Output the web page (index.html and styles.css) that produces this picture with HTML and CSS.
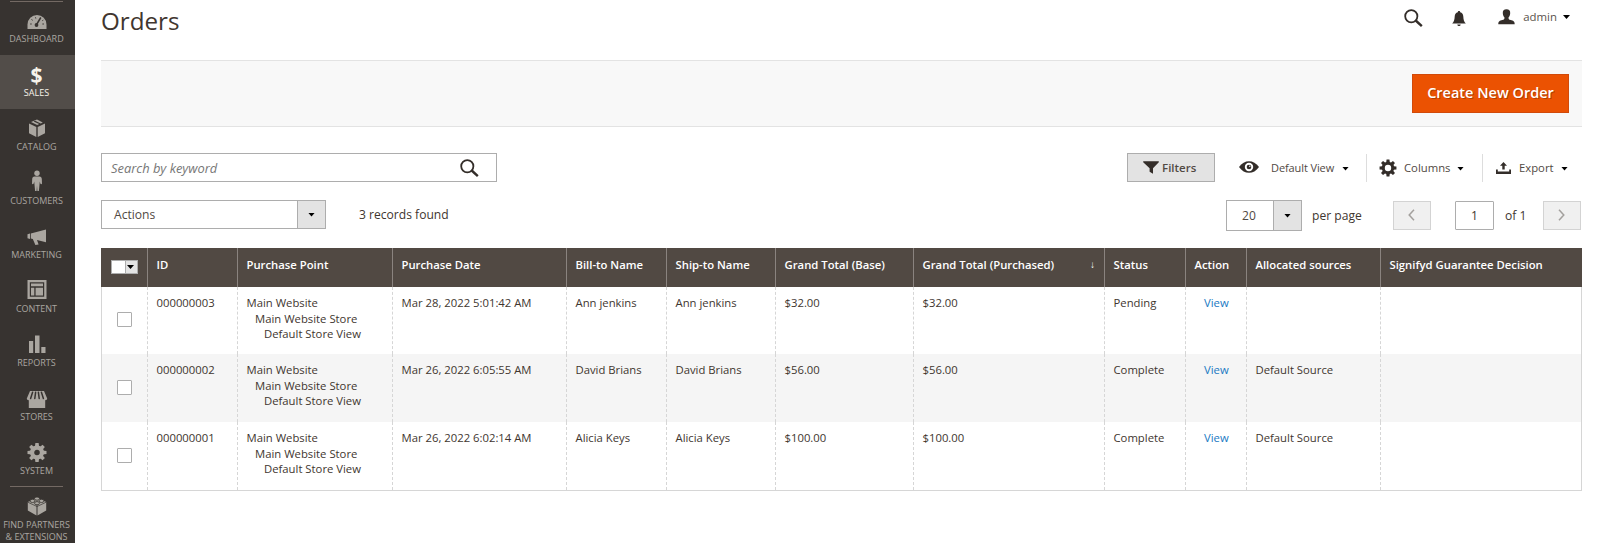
FILE: index.html
```html
<!DOCTYPE html>
<html lang="en">
<head>
    <meta charset="UTF-8">
    <meta name="viewport" content="width=device-width, initial-scale=1.0">
    <title>Orders</title>
    <link rel="stylesheet" href="styles.css">
</head>
<body>
    <!-- Left menu -->
    <nav class="menu">
        <a class="menu-item first">
            <svg viewBox="0 0 20 20"><path d="M.5 20V15.500a9.500 9.500 0 0 1 19 0V20z" fill="currentColor"/><path d="M3.200 15h1.500M4.500 10.500l1.200.8M8.500 8.300l.3 1.200M15.400 15h1.500M15.300 11.700l1-.6" stroke="#373330" stroke-width="1"/><path d="M13.800 8.500 9.300 16" stroke="#373330" stroke-width="1.500"/><circle cx="9.500" cy="16" r="1.900" fill="#373330"/></svg>
            <span>DASHBOARD</span>
        </a>
        <a class="menu-item active">
            <b class="dollar">$</b>
            <span>SALES</span>
        </a>
        <a class="menu-item">
            <svg viewBox="0 0 20 20"><path d="M10 2.500 4 5.100l6.200 2.900 2-.9L6.600 4.400l1.500-.6 5.700 2.600 2-1zM2 6.400l7.300 3.500V20L2 16.300zM18 6.400l-7.300 3.500V20l7.300-3.700z" fill="currentColor"/></svg>
            <span>CATALOG</span>
        </a>
        <a class="menu-item">
            <svg viewBox="0 0 20 20"><circle cx="10" cy="2.300" r="2.700" fill="currentColor"/><path d="M7.500 5.500h5c1.500 0 2.200 1 2.300 2.400l.2 4.600c0 1-1.200 1-1.600.3l-.6-2.300-.9 9.500h-1.500L10 14.500 9.600 20H8.100l-.9-9.500-.6 2.300c-.4.700-1.600.7-1.600-.3l.2-4.600c.1-1.400.8-2.400 2.300-2.400z" fill="currentColor"/></svg>
            <span>CUSTOMERS</span>
        </a>
        <a class="menu-item">
            <svg viewBox="0 0 20 20"><path d="M.5 9.300l2.500-.7v5.300l-2.500-.6zM3.800 8.400 19 4.500v12.800l-9-2.200 1.600 4.300-3.200.6-2.600-6-2-.5z" fill="currentColor"/></svg>
            <span>MARKETING</span>
        </a>
        <a class="menu-item">
            <svg viewBox="0 0 20 20"><path d="M.5 1h19v19H.5zM2.800 3.300v14.400h14.400V3.300z" fill="currentColor" fill-rule="evenodd"/><path d="M4 4.500h12v2.800H4zM4 8.800h3.300v7.700H4zM8.600 8.800H16v7.700H8.600z" fill="currentColor"/></svg>
            <span>CONTENT</span>
        </a>
        <a class="menu-item">
            <svg viewBox="0 0 20 20"><path d="M2 8h4.200v12H2zM8 2.500h4.500V20H8zM14.300 14h4.200v6h-4.200z" fill="currentColor"/></svg>
            <span>REPORTS</span>
        </a>
        <a class="menu-item">
            <svg class="low" viewBox="0 0 20 20"><path d="M3 3h14l3.200 7.500c0 1-.8 1.700-2 1.700V20H1.800v-7.800c-1.200 0-2-.7-2-1.700z" fill="currentColor"/><path d="M5.600 4.300 3.600 10.500M8.600 4.300l-.8 6.200M11.400 4.300l.8 6.200M14.400 4.300l2 6.200" stroke="#373330" stroke-width="1.500" stroke-linecap="round"/></svg>
            <span>STORES</span>
        </a>
        <a class="menu-item">
            <svg class="low" viewBox="0 0 20 20"><g fill="currentColor"><path id="tooth" d="M8.400 1h3.200l.5 4H7.900z"/><use href="#tooth" transform="rotate(45 10 10.500)"/><use href="#tooth" transform="rotate(90 10 10.500)"/><use href="#tooth" transform="rotate(135 10 10.500)"/><use href="#tooth" transform="rotate(180 10 10.500)"/><use href="#tooth" transform="rotate(225 10 10.500)"/><use href="#tooth" transform="rotate(270 10 10.500)"/><use href="#tooth" transform="rotate(315 10 10.500)"/></g><circle cx="10" cy="10.500" r="4.900" fill="none" stroke="currentColor" stroke-width="4.200"/></svg>
            <span>SYSTEM</span>
        </a>
        <a class="menu-item last">
            <svg class="low" viewBox="0 0 20 20"><path d="M10 2 .8 6v8.500L9.500 19.500V10.500zM10 2l9.200 4v8.500l-8.700 5v-9z" fill="currentColor"/><path d="M.8 6.200 10 10.500l9.200-4.300" fill="none" stroke="#373330" stroke-width=".7"/><g fill="currentColor" stroke="#373330" stroke-width=".8"><ellipse cx="10" cy="2.600" rx="2.500" ry="1.600"/><ellipse cx="5.500" cy="4.900" rx="2.500" ry="1.600"/><ellipse cx="14.500" cy="4.900" rx="2.500" ry="1.600"/><ellipse cx="10" cy="7.200" rx="2.500" ry="1.600"/></g></svg>
            <span>FIND PARTNERS<br>&amp; EXTENSIONS</span>
        </a>
    </nav>

    <main class="page">
        <header class="page-header">
            <h1>Orders</h1>
            <div class="header-tools">
                <svg class="icon-search" viewBox="0 0 19 18"><circle cx="7.300" cy="7.200" r="6.100" fill="none" stroke="currentColor" stroke-width="1.800"/><path d="M11.700 11.500 17.800 17.200" stroke="currentColor" stroke-width="2.400"/></svg>
                <svg class="icon-bell" viewBox="0 0 14 16"><path d="M7 0c.8 0 1.200.5 1.200 1.200 2 .5 3 2.200 3.100 4.300.1 3.500.9 5.300 2.500 7H.2c1.600-1.700 2.400-3.500 2.500-7C2.800 3.400 3.800 1.700 5.800 1.200 5.800.5 6.200 0 7 0zM5.300 13.400h3.400C8.600 14.500 7.800 15 7 15s-1.600-.5-1.700-1.600z" fill="currentColor"/></svg>
                <div class="user">
                    <svg class="icon-user" viewBox="0 0 17 16"><path d="M8.500.3c2.600 0 3.900 1.600 3.700 4-.1 2-.8 3.200-1.700 4.300 0 1.700.4 2 2.200 2.500 2.500.6 4 1.200 4 4.200H.3c0-3 1.500-3.600 4-4.200 1.800-.5 2.200-.8 2.200-2.500C5.600 7.500 4.900 6.300 4.800 4.300c-.2-2.400 1.100-4 3.700-4z" fill="currentColor"/></svg>
                    <span>admin</span>
                    <i class="caret"></i>
                </div>
            </div>
        </header>

        <div class="page-actions">
            <button class="primary">Create New Order</button>
        </div>

        <div class="toolbar">
            <div class="search">
                <span>Search by keyword</span>
                <svg class="icon-search" viewBox="0 0 19 18"><circle cx="7.300" cy="7.200" r="6.100" fill="none" stroke="currentColor" stroke-width="1.800"/><path d="M11.700 11.500 17.800 17.200" stroke="currentColor" stroke-width="2.400"/></svg>
            </div>
            <div class="grid-tools">
                <button class="filters">
                    <svg viewBox="0 0 16 13"><path d="M.2.300h15.600v1L10 7.300V12.800L6.600 10.800V7.300L.2 1.300z" fill="currentColor"/></svg>
                    Filters
                </button>
                <div class="tool view">
                    <svg class="icon-eye" viewBox="0 0 20 12"><path d="M0 6C2.800 2 6.200.2 10 .2S17.200 2 20 6c-2.800 4-6.200 5.800-10 5.800S2.800 10 0 6z" fill="currentColor"/><circle cx="10" cy="6" r="4.200" fill="#fff"/><circle cx="10" cy="6" r="2.300" fill="currentColor"/><circle cx="10.800" cy="5.200" r=".7" fill="#fff"/></svg>
                    <span>Default View</span>
                    <i class="caret"></i>
                </div>
                <div class="tool columns">
                    <svg class="icon-gear" viewBox="1 1.500 18 18"><g fill="currentColor"><use href="#tooth"/><use href="#tooth" transform="rotate(45 10 10.500)"/><use href="#tooth" transform="rotate(90 10 10.500)"/><use href="#tooth" transform="rotate(135 10 10.500)"/><use href="#tooth" transform="rotate(180 10 10.500)"/><use href="#tooth" transform="rotate(225 10 10.500)"/><use href="#tooth" transform="rotate(270 10 10.500)"/><use href="#tooth" transform="rotate(315 10 10.500)"/></g><circle cx="10" cy="10.500" r="5.300" fill="none" stroke="currentColor" stroke-width="3.400"/></svg>
                    <span>Columns</span>
                    <i class="caret"></i>
                </div>
                <div class="tool export">
                    <svg class="icon-export" viewBox="0 0 15 12"><path d="M7.500 0 11 3.700H8.700V7.500H6.300V3.700H4zM0 7.500h1.800v2h11.400v-2H15V12H0z" fill="currentColor"/></svg>
                    <span>Export</span>
                    <i class="caret"></i>
                </div>
            </div>
        </div>

        <div class="toolbar-second">
            <div class="select actions">
                <span>Actions</span>
                <div class="select-arrow"><i class="caret"></i></div>
            </div>
            <span class="records">3 records found</span>
            <div class="pager">
                <div class="select per-page">
                    <span>20</span>
                    <div class="select-arrow"><i class="caret"></i></div>
                </div>
                <span class="per-page-label">per page</span>
                <button class="page-button"><svg viewBox="0 0 7 12"><path d="M6 .8 1.200 6 6 11.200"/></svg></button>
                <div class="page-input">1</div>
                <span class="page-total">of 1</span>
                <button class="page-button"><svg viewBox="0 0 7 12"><path d="M1 .8 5.800 6 1 11.200"/></svg></button>
            </div>
        </div>

        <table class="orders">
            <colgroup>
                <col class="col-check"><col class="col-id"><col class="col-point"><col class="col-date">
                <col class="col-bill"><col class="col-ship"><col class="col-base"><col class="col-purchased">
                <col class="col-status"><col class="col-action"><col class="col-sources"><col class="col-signifyd">
            </colgroup>
            <thead>
                <tr>
                    <th><div class="multicheck"><i class="caret"></i></div></th>
                    <th>ID</th>
                    <th>Purchase Point</th>
                    <th>Purchase Date</th>
                    <th>Bill-to Name</th>
                    <th>Ship-to Name</th>
                    <th>Grand Total (Base)</th>
                    <th><div class="sorted">Grand Total (Purchased)<span>↓</span></div></th>
                    <th>Status</th>
                    <th>Action</th>
                    <th>Allocated sources</th>
                    <th>Signifyd Guarantee Decision</th>
                </tr>
            </thead>
            <tbody>
                <tr>
                    <td class="check"><div class="checkbox"></div></td>
                    <td>000000003</td>
                    <td>Main Website<div class="store">Main Website Store</div><div class="store-view">Default Store View</div></td>
                    <td>Mar 28, 2022 5:01:42 AM</td>
                    <td>Ann jenkins</td>
                    <td>Ann jenkins</td>
                    <td>$32.00</td>
                    <td>$32.00</td>
                    <td>Pending</td>
                    <td class="action"><a>View</a></td>
                    <td></td>
                    <td></td>
                </tr>
                <tr>
                    <td class="check"><div class="checkbox"></div></td>
                    <td>000000002</td>
                    <td>Main Website<div class="store">Main Website Store</div><div class="store-view">Default Store View</div></td>
                    <td>Mar 26, 2022 6:05:55 AM</td>
                    <td>David Brians</td>
                    <td>David Brians</td>
                    <td>$56.00</td>
                    <td>$56.00</td>
                    <td>Complete</td>
                    <td class="action"><a>View</a></td>
                    <td>Default Source</td>
                    <td></td>
                </tr>
                <tr>
                    <td class="check"><div class="checkbox"></div></td>
                    <td>000000001</td>
                    <td>Main Website<div class="store">Main Website Store</div><div class="store-view">Default Store View</div></td>
                    <td>Mar 26, 2022 6:02:14 AM</td>
                    <td>Alicia Keys</td>
                    <td>Alicia Keys</td>
                    <td>$100.00</td>
                    <td>$100.00</td>
                    <td>Complete</td>
                    <td class="action"><a>View</a></td>
                    <td>Default Source</td>
                    <td></td>
                </tr>
            </tbody>
        </table>
    </main>
</body>
</html>
```
FILE: styles.css
```css
* {
    box-sizing: border-box;
}

body {
    margin: 0;
    display: flex;
    height: 543px;
    overflow: hidden;
    background: #fff;
    color: #41362f;
    font-family: "Open Sans", "Noto Sans", sans-serif;
    font-size: 12.1px;
}

svg {
    display: block;
    flex: none;
    overflow: visible;
}

button {
    font-family: inherit;
    padding: 0;
}

.caret {
    display: block;
    flex: none;
    width: 7px;
    height: 4px;
    background: #000;
    clip-path: polygon(0 0, 100% 0, 50% 100%);
}

/* Left menu */
.menu {
    flex: none;
    width: 75px;
    padding-top: 1px;
    background: #373330;
}

.menu-item {
    position: relative;
    display: flex;
    flex-direction: column;
    align-items: center;
    height: 54px;
    padding-top: 8px;
    padding-right: 2px;
    color: #aaa6a0;
    font-size: 9px;
    line-height: 12px;
    text-align: center;
    white-space: nowrap;
}

.menu-item svg {
    width: 20px;
    height: 20px;
}

.menu-item span {
    margin-top: 4px;
}

.menu-item .low {
    margin-top: 1px;
}

.menu-item .low + span {
    margin-top: 3px;
}

.menu-item.active {
    background: #524d49;
    color: #f7f3eb;
}

.menu-item.first::before,
.menu-item.last::before {
    content: '';
    position: absolute;
    top: 0;
    left: 10px;
    width: 53px;
    height: 1px;
    background: #736963;
}

.menu-item.last::before {
    top: -1px;
}

.dollar {
    height: 20px;
    font-size: 21px;
    line-height: 24px;
}

/* Page header */
.page {
    width: 1507px;
    padding: 0 0 0 26px;
}

.page-header {
    display: flex;
    justify-content: space-between;
    height: 60px;
}

h1 {
    margin: 4px 0 0;
    font-size: 24.200px;
    font-weight: 400;
    line-height: 34px;
}

.header-tools {
    display: flex;
    align-items: center;
    height: 36px;
    padding-right: 12px;
    color: #332d29;
}

.icon-search {
    width: 19px;
    height: 18px;
    color: #332d29;
}

.icon-bell {
    width: 14px;
    height: 16px;
    margin: 1px 32px 0 29px;
}

.user {
    display: flex;
    align-items: center;
    font-size: 11.400px;
    height: 34px;
    margin-bottom: 4px;
}

.icon-user {
    width: 17px;
    height: 16px;
    margin-top: 1px;
}

.user span {
    margin: 0 6px 0 8px;
    color: #5b534d;
}

.user .caret {
    margin-top: 2px;
}

.page-actions {
    display: flex;
    justify-content: flex-end;
    align-items: center;
    height: 67px;
    padding-right: 13px;
    background: #f8f8f8;
    border-top: 1px solid #e3e3e3;
    border-bottom: 1px solid #e3e3e3;
}

.primary {
    width: 157px;
    height: 39px;
    padding-bottom: 2px;
    background: #eb5202;
    border: 1px solid #d14a0a;
    color: #fff;
    font-size: 14.500px;
    font-weight: 600;
    text-shadow: 1px 1px 0 rgba(0, 0, 0, 0.25);
}

/* Search and grid tools */
.toolbar {
    display: flex;
    justify-content: space-between;
    height: 29px;
    margin-top: 26px;
}

.search {
    display: flex;
    justify-content: space-between;
    align-items: center;
    width: 396px;
    padding: 0 17px 0 9px;
    border: 1px solid #adadad;
    color: #777;
    font-size: 12.900px;
    font-style: italic;
}

.grid-tools {
    display: flex;
    align-items: center;
    width: 455px;
    font-size: 11.300px;
}

.filters {
    display: flex;
    align-items: center;
    width: 88px;
    height: 29px;
    padding: 0 0 1px 15px;
    gap: 3px;
    background: #e3e3e3;
    border: 1px solid #adadad;
    color: #514943;
    font-size: 11.500px;
    font-weight: 600;
}

.filters svg {
    width: 16px;
    height: 13px;
    color: #332d29;
}

.tool {
    display: flex;
    align-items: center;
    height: 28px;
    color: #514943;
}

.tool .caret {
    margin-top: 2px;
}

.view {
    width: 151px;
    padding-left: 24px;
}

.view span {
    width: 71px;
    margin-left: 12px;
    font-size: 11px;
    letter-spacing: -0.1px;
}

.columns {
    width: 116px;
    padding-left: 13px;
    border-left: 1px solid #ddd;
}

.columns span {
    width: 53px;
    margin-left: 8px;
}

.export {
    padding-left: 13px;
    border-left: 1px solid #ddd;
}

.export span {
    width: 42px;
    margin-left: 8px;
}

.view svg,
.columns svg,
.export svg {
    color: #332d29;
}

.icon-eye {
    width: 20px;
    height: 12px;
    margin-bottom: 2px;
}

.icon-gear {
    width: 16px;
    height: 16px;
}

.icon-export {
    width: 15px;
    height: 12px;
}

/* Mass actions and pager */
.toolbar-second {
    display: flex;
    align-items: flex-start;
    margin-top: 18px;
    height: 48px;
}

.select {
    display: flex;
    justify-content: space-between;
    align-items: center;
    border: 1px solid #adadad;
    color: #514943;
}

.select-arrow {
    display: flex;
    justify-content: center;
    align-items: center;
    align-self: stretch;
    width: 28px;
    background: #e3e3e3;
    border-left: 1px solid #adadad;
}

.actions {
    width: 225px;
    height: 29px;
    padding-left: 12px;
}

.records {
    margin-left: 33px;
    line-height: 29px;
}

.pager {
    display: flex;
    align-items: center;
    margin-left: auto;
    margin-right: 1px;
    height: 31px;
}

.per-page {
    width: 76px;
    height: 31px;
    padding-left: 15px;
}

.per-page-label {
    width: 81px;
    margin-left: 10px;
}

.page-button {
    display: flex;
    justify-content: center;
    align-items: center;
    width: 38px;
    height: 29px;
    background: #f0f0f0;
    border: 1px solid #d3d3d3;
}

.page-button svg {
    width: 7px;
    height: 12px;
    margin-right: 2px;
    margin-bottom: 2px;
    fill: none;
    stroke: #a3a09d;
    stroke-width: 1.500;
}

.page-input {
    width: 39px;
    height: 29px;
    margin-left: 24px;
    border: 1px solid #adadad;
    border-radius: 1px;
    line-height: 28px;
    text-align: center;
}

.page-total {
    width: 38px;
    margin-left: 11px;
}

/* Orders grid */
.orders {
    width: 1481px;
    table-layout: fixed;
    border-collapse: separate;
    border-spacing: 0;
    border: 1px solid #d6d6d6;
    border-top: 0;
    font-size: 11.300px;
    line-height: 15.500px;
}

.col-check { width: 45px; }
.col-id { width: 90px; }
.col-point { width: 155px; }
.col-date { width: 174px; }
.col-bill { width: 100px; }
.col-ship { width: 109px; }
.col-base { width: 138px; }
.col-purchased { width: 191px; }
.col-status { width: 81px; }
.col-action { width: 61px; }
.col-sources { width: 134px; }

.orders th {
    height: 39px;
    padding: 9px 0 0 8.500px;
    background: #514943;
    border-left: 1px solid #8a837f;
    color: #fff;
    font-weight: 600;
    text-align: left;
    vertical-align: top;
    white-space: nowrap;
}

.orders th:first-child {
    padding: 12px 0 0 9px;
    border-left: 0;
    box-shadow: -1px 0 0 #514943;
}

.orders th:last-child {
    box-shadow: 1px 0 0 #514943;
}

.orders td {
    height: 68px;
    padding: 8px 0 0 8.500px;
    border-left: 1px dashed #d6d6d6;
    color: #41362f;
    vertical-align: top;
    white-space: nowrap;
}

.orders tbody tr:first-child td {
    height: 67px;
}

.orders td:first-child {
    border-left: 0;
}

.orders tbody tr:nth-child(even) {
    background: #f5f5f5;
}

.orders .check {
    padding: 0 0 0 15px;
    vertical-align: middle;
}

.checkbox {
    width: 15px;
    height: 15px;
    margin-top: -2px;
    background: #fff;
    border: 1px solid #adadad;
    border-radius: 1px;
}

.multicheck {
    display: flex;
    justify-content: flex-end;
    align-items: center;
    width: 27px;
    height: 14px;
    padding-right: 3px;
    background: linear-gradient(to right, #fff 13px, #adadad 13px, #adadad 14px, #e3e3e3 14px);
    border: 1px solid #adadad;
}

.sorted {
    display: flex;
    justify-content: space-between;
    padding-right: 9px;
}

.sorted span {
    font-weight: 400;
    font-size: 10px;
}

.store {
    padding-left: 8.500px;
}

.store-view {
    padding-left: 17.500px;
}

.orders .action {
    padding-left: 18px;
}

.action a {
    color: #1979c3;
}
```
